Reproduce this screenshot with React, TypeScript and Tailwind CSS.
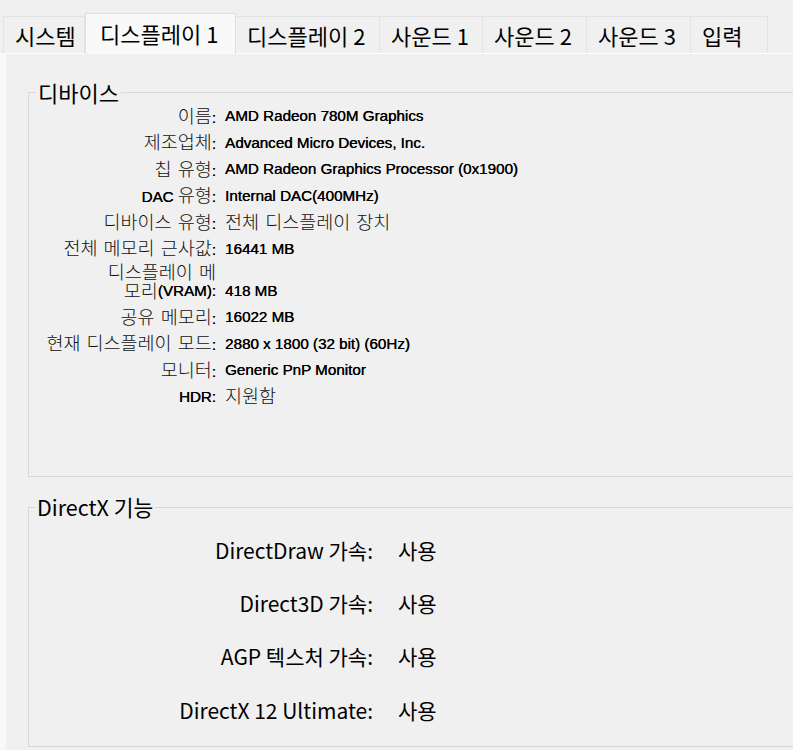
const tabs = [
  { label: '시스템', width: 'w-[82px]', active: false },
  { label: '디스플레이 1', width: 'w-[151px]', active: true },
  { label: '디스플레이 2', width: 'w-[144px]', active: false },
  { label: '사운드 1', width: 'w-[103px]', active: false },
  { label: '사운드 2', width: 'w-[104px]', active: false },
  { label: '사운드 3', width: 'w-[104px]', active: false },
  { label: '입력', width: 'w-[77px]', active: false },
]

const deviceRows: { label: string; value: string }[] = [
  { label: '이름:', value: 'AMD Radeon 780M Graphics' },
  { label: '제조업체:', value: 'Advanced Micro Devices, Inc.' },
  { label: '칩 유형:', value: 'AMD Radeon Graphics Processor (0x1900)' },
  { label: 'DAC 유형:', value: 'Internal DAC(400MHz)' },
  { label: '디바이스 유형:', value: '전체 디스플레이 장치' },
  { label: '전체 메모리 근사값:', value: '16441 MB' },
  { label: '디스플레이 메\n모리(VRAM):', value: '418 MB' },
  { label: '공유 메모리:', value: '16022 MB' },
  { label: '현재 디스플레이 모드:', value: '2880 x 1800 (32 bit) (60Hz)' },
  { label: '모니터:', value: 'Generic PnP Monitor' },
  { label: 'HDR:', value: '지원함' },
]

const directxRows = [
  { label: 'DirectDraw 가속:', value: '사용' },
  { label: 'Direct3D 가속:', value: '사용' },
  { label: 'AGP 텍스처 가속:', value: '사용' },
  { label: 'DirectX 12 Ultimate:', value: '사용' },
]

// Hangul runs get the lighter, larger Korean face; the rest stays in the Tahoma-ish face
function Mixed({ text }: { text: string }) {
  const parts = text.split(/([\uac00-\ud7a3]+(?: [\uac00-\ud7a3]+)*)/)
  return (
    <>
      {parts.map((part, i) =>
        /[\uac00-\ud7a3]/.test(part) ? (
          <span
            key={i}
            className="font-['Noto_Sans_CJK_KR',sans-serif] text-[18.5px] font-light text-[#111] [word-spacing:2px]"
          >
            {part}
          </span>
        ) : (
          <span key={i} className="[text-shadow:0.3px_0_0_currentColor]">
            {part}
          </span>
        )
      )}
    </>
  )
}

export default function App() {
  return (
    <div className="w-[793px] h-[750px] overflow-hidden bg-[#f0f0f0] text-black">
      {/* tab strip */}
      <div className="relative z-10 flex items-end pl-[3px] pt-[13px] font-['Noto_Sans_CJK_KR',sans-serif] text-[22px]">
        {tabs.map((tab) => (
          <div
            key={tab.label}
            className={
              tab.active
                ? `${tab.width} -mb-px flex h-[41px] items-center border border-b-0 border-[#dedede] bg-[#f9f9f9] pb-[3px] pl-[14px] leading-none`
                : `${tab.width} flex h-[37px] items-center border-t border-r border-[#e3e3e3] bg-[#f0f0f0] pl-[11px] leading-none first:border-l`
            }
          >
            {tab.label}
          </div>
        ))}
      </div>

      {/* page */}
      <div className="h-full bg-[#f8f8f8] pl-[6px]">
        <div className="h-full border-t border-white bg-[#f0f0f0] pl-[22px] pt-[27px]">
          <fieldset className="h-[396px] w-[800px] border border-[#d8d8d8]">
            <legend className="ml-[7px] px-[2px] font-['Noto_Sans_CJK_KR',sans-serif] text-[22px] leading-[22px]">
              디바이스
            </legend>
            <div className="font-['Liberation_Sans','Noto_Sans_CJK_KR',sans-serif] text-[15.2px]">
              {deviceRows.map((row) => {
                const lines = row.label.split('\n')
                if (lines.length > 1) {
                  return (
                    <div key={row.label} className="flex h-[42px] items-start">
                      <div className="w-[187px]">
                        {lines.map((line) => (
                          <div key={line} className="flex h-[19px] items-center justify-end whitespace-nowrap leading-none">
                            <Mixed text={line} />
                          </div>
                        ))}
                      </div>
                      <div className="ml-[9px] mt-[19px] flex h-[19px] items-center leading-none">
                        <Mixed text={row.value} />
                      </div>
                    </div>
                  )
                }
                return (
                  <div key={row.label} className="flex h-[26.5px] items-center leading-[20px]">
                    <div className="w-[187px] whitespace-nowrap text-right">
                      <Mixed text={row.label} />
                    </div>
                    <div className="ml-[9px] whitespace-nowrap">
                      <Mixed text={row.value} />
                    </div>
                  </div>
                )
              })}
            </div>
          </fieldset>

          <fieldset className="mt-[19px] h-[251px] w-[800px] border border-[#d8d8d8] pt-[5px]">
            <legend className="ml-[6px] px-[2px] font-['Noto_Sans_CJK_KR',sans-serif] text-[21.5px] leading-[22px]">
              DirectX 기능
            </legend>
            <div className="font-['Noto_Sans_CJK_KR',sans-serif] text-[21px] leading-[26px]">
              {directxRows.map((row) => (
                <div key={row.label} className="flex h-[53.3px] items-center">
                  <div className="w-[344px] text-right">{row.label}</div>
                  <div className="ml-[25px]">{row.value}</div>
                </div>
              ))}
            </div>
          </fieldset>
        </div>
      </div>
    </div>
  )
}
